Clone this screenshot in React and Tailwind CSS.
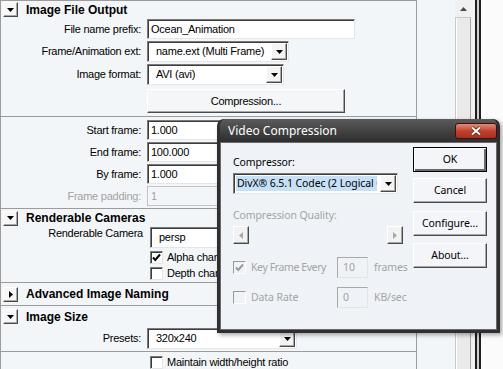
import React from "react";

const raised =
  "border border-t-white border-l-white border-r-[#4a4a4a] border-b-[#4a4a4a] shadow-[inset_-1px_-1px_0_#a8a8a8]";
const sunken =
  "border border-t-[#7a7a7a] border-l-[#7a7a7a] border-r-[#e6e6e6] border-b-[#e6e6e6] shadow-[inset_1px_1px_0_#3c3c3c]";

const DownTri = ({ color = "#000" }) => (
  <svg width="7" height="4" viewBox="0 0 7 4">
    <path d="M0 0h7L3.5 4z" fill={color} />
  </svg>
);

// collapse / expand button of a frame header
const TriBtn = ({ open = true }) => (
  <div
    className={`w-[15px] h-[15px] ml-[2px] flex items-center justify-center bg-[#f7f7f7] ${raised}`}
  >
    {open ? (
      <DownTri />
    ) : (
      <svg width="4" height="7" viewBox="0 0 4 7">
        <path d="M0 0v7l4-3.5z" fill="#000" />
      </svg>
    )}
  </div>
);

const ArrowBtn = () => (
  <div
    className={`w-[16px] h-[17px] mr-[1px] shrink-0 flex items-center justify-center bg-[#f4f4f4] ${raised}`}
  >
    <DownTri />
  </div>
);

const Check = ({ checked, color = "#000" }) => (
  <div
    className={`w-[13px] h-[13px] shrink-0 flex items-center justify-center bg-white ${sunken}`}
  >
    {checked && (
      <svg width="9" height="9" viewBox="0 0 9 9">
        <path
          d="M1 4.5l2.3 2.5L8 1.5"
          stroke={color}
          strokeWidth="2"
          fill="none"
        />
      </svg>
    )}
  </div>
);

const Row = ({ label, gray, className = "", children }) => (
  <div className={`flex items-center ${className}`}>
    <div
      className={`w-[140px] text-right ${gray ? "text-[#a2a2a2]" : "text-black"}`}
    >
      {label}
    </div>
    <div className="ml-[6px]">{children}</div>
  </div>
);

const Field = ({ value, className = "", gray }) => (
  <div
    className={`h-[20px] flex items-center pl-[3px] ${
      gray
        ? "bg-[#f3f6f9] border border-[#c4c4c4] text-[#a2a2a2]"
        : `bg-white ${sunken}`
    } ${className}`}
  >
    {value}
  </div>
);

const Select = ({ value, className = "" }) => (
  <div className={`h-[21px] flex items-center bg-white ${sunken} ${className}`}>
    <span className="flex-1 pl-[8px] whitespace-nowrap overflow-hidden">
      {value}
    </span>
    <ArrowBtn />
  </div>
);

const Header = ({ title, open = true, className = "" }) => (
  <div className={`flex items-center ${className}`}>
    <TriBtn open={open} />
    <span className="ml-[8px] font-bold text-[12px] tracking-normal">
      {title}
    </span>
  </div>
);

const DlgButton = ({ children, isDefault, className = "" }) => (
  <div
    className={`w-[74px] h-[25px] flex items-center justify-center bg-[#f3f5f8] ${
      isDefault
        ? "border border-black shadow-[inset_1px_1px_0_#fff,inset_-2px_-2px_0_#6a6a6a]"
        : raised
    } ${className}`}
  >
    {children}
  </div>
);

const GrayBox = ({ value }) => (
  <div className="w-[31px] h-[21px] shrink-0 pl-[5px] flex items-center border border-t-[#a8a8a8] border-l-[#a8a8a8] border-r-[#e4e4e4] border-b-[#e4e4e4]">
    {value}
  </div>
);

const VideoCompression = () => (
  <div className="absolute left-[217px] top-[119px] w-[283px] h-[214px] rounded-t-[7px] bg-[#2f2f2f] px-[3px] pb-[3px] flex flex-col shadow-[2px_2px_4px_rgba(0,0,0,0.35)] font-['Noto_Sans',sans-serif] text-[10.5px] tracking-[-0.1px]">
    <div className="relative h-[23px] flex items-center rounded-t-[6px] bg-linear-to-b from-[#5b5b5b] to-[#2e2e2e]">
      <span className="pl-[8px] text-white text-[12px] tracking-normal">
        Video Compression
      </span>
      <div className="absolute right-[0px] top-[4px] w-[42px] h-[16px] rounded-[3px] border border-[#3a1010] bg-linear-to-b from-[#e08a7a] via-[#c2402c] to-[#a8301f] flex items-center justify-center">
        <svg width="12" height="10" viewBox="0 0 12 10">
          <path
            d="M2 1.5l8 7M10 1.5l-8 7"
            stroke="#5a1a10"
            strokeWidth="3.4"
          />
          <path d="M2 1.5l8 7M10 1.5l-8 7" stroke="#fff" strokeWidth="2" />
        </svg>
      </div>
    </div>
    <div className="flex-1 bg-[#eff3f8] border border-[#6a6a6a] flex">
      <div className="w-[170px] shrink-0 ml-[12px] flex flex-col">
        <div className="mt-[12px] h-[15px] leading-[15px] text-black">
          Compressor:
        </div>
        <div
          className={`mt-[3px] w-[165px] h-[21px] flex items-center bg-white ${sunken}`}
        >
          <span className="ml-[2px] flex-1 h-[15px] leading-[15px] pl-[1px] bg-[#c6e1f7] text-black whitespace-nowrap overflow-hidden">
            DivX® 6.5.1 Codec (2 Logical CPUs)
          </span>
          <div className="w-[3px]" />
          <ArrowBtn />
        </div>
        <div className="mt-[14px] h-[15px] leading-[15px] text-[#a3a3a3]">
          Compression Quality:
        </div>
        <div className="mt-[3px] w-[170px] h-[18px] flex justify-between">
          <div
            className={`w-[16px] h-[18px] flex items-center justify-center bg-[#f2f2f2] ${raised}`}
          >
            <svg width="4" height="7" viewBox="0 0 4 7">
              <path d="M4 0v7L0 3.5z" fill="#a8a8a8" />
            </svg>
          </div>
          <div
            className={`w-[16px] h-[18px] flex items-center justify-center bg-[#f2f2f2] ${raised}`}
          >
            <svg width="4" height="7" viewBox="0 0 4 7">
              <path d="M0 0v7l4-3.5z" fill="#a8a8a8" />
            </svg>
          </div>
        </div>
        <div className="mt-[13px] h-[21px] flex items-center text-[#a3a3a3] whitespace-nowrap">
          <div className="w-[104px] shrink-0 flex items-center">
            <div className="w-[13px] h-[13px] shrink-0 flex items-center justify-center border border-t-[#9a9a9a] border-l-[#9a9a9a] border-r-white border-b-white bg-[#eff3f8]">
              <svg width="9" height="9" viewBox="0 0 9 9">
                <path
                  d="M1 4.5l2.3 2.5L8 1.5"
                  stroke="#9a9a9a"
                  strokeWidth="2"
                  fill="none"
                />
              </svg>
            </div>
            <span className="ml-[5px] tracking-[-0.4px]">Key Frame Every</span>
          </div>
          <GrayBox value="10" />
          <span className="ml-[6px] shrink-0">frames</span>
        </div>
        <div className="mt-[9px] h-[21px] flex items-center text-[#a3a3a3] whitespace-nowrap">
          <div className="w-[104px] shrink-0 flex items-center">
            <div className="w-[13px] h-[13px] shrink-0 border border-t-[#9a9a9a] border-l-[#9a9a9a] border-r-white border-b-white bg-[#eff3f8]" />
            <span className="ml-[5px]">Data Rate</span>
          </div>
          <GrayBox value="0" />
          <span className="ml-[6px] shrink-0">KB/sec</span>
        </div>
      </div>
      <div className="ml-[10px] flex flex-col text-black">
        <DlgButton isDefault className="mt-[4px]">
          OK
        </DlgButton>
        <DlgButton className="mt-[6px]">Cancel</DlgButton>
        <DlgButton className="mt-[8px]">Configure...</DlgButton>
        <DlgButton className="mt-[7px]">About...</DlgButton>
      </div>
    </div>
  </div>
);

export default function App() {
  return (
    <div className="relative w-[503px] h-[369px] overflow-hidden bg-[#f3f6f9] flex font-['Liberation_Sans',Arial,sans-serif] text-[11px] tracking-[-0.25px] text-black">
      {/* attribute panel */}
      <div className="w-[455px] shrink-0 flex flex-col">
        {/* Image File Output */}
        <div className="w-[417px] h-[117px] border border-[#9c9c9c] flex flex-col">
          <Header title="Image File Output" className="h-[17px]" />
          <Row label="File name prefix:" className="mt-[1px] h-[20px]">
            <Field value="Ocean_Animation" className="w-[208px]" />
          </Row>
          <Row label="Frame/Animation ext:" className="mt-[2px] h-[21px]">
            <Select value="name.ext (Multi Frame)" className="w-[142px]" />
          </Row>
          <Row label="Image format:" className="mt-[2px] h-[21px]">
            <Select value="AVI (avi)" className="w-[137px]" />
          </Row>
          <Row label="" className="mt-[4px] h-[24px]">
            <div
              className={`w-[198px] h-[24px] flex items-center justify-center bg-[#f4f6f8] ${raised}`}
            >
              Compression...
            </div>
          </Row>
        </div>
        <div className="w-[417px] h-[92px] border border-t-0 border-[#9c9c9c] flex flex-col gap-[2px] pt-[3px]">
          <Row label="Start frame:" className="h-[20px]">
            <Field value="1.000" className="w-[110px]" />
          </Row>
          <Row label="End frame:" className="h-[20px]">
            <Field value="100.000" className="w-[110px]" />
          </Row>
          <Row label="By frame:" className="h-[20px]">
            <Field value="1.000" className="w-[110px]" />
          </Row>
          <Row label="Frame padding:" gray className="h-[20px]">
            <Field value="1" gray className="w-[110px]" />
          </Row>
        </div>
        {/* Renderable Cameras */}
        <div className="w-[417px] h-[74px] border border-t-0 border-[#9c9c9c] flex flex-col">
          <Header title="Renderable Cameras" className="h-[18px]" />
          <div className="flex">
            <div className="w-[142px] text-right mt-[-2px]">
              Renderable Camera
            </div>
            <div
              className={`ml-[7px] w-[130px] h-[21px] flex items-center pl-[8px] bg-white ${sunken}`}
            >
              persp
            </div>
          </div>
          <div className="ml-[149px] mt-[2px] flex items-center h-[14px]">
            <Check checked />
            <span className="ml-[4px]">Alpha channel (Mask)</span>
          </div>
          <div className="ml-[149px] mt-[2px] flex items-center h-[14px]">
            <Check />
            <span className="ml-[4px]">Depth channel (Z Depth)</span>
          </div>
        </div>
        {/* Advanced Image Naming */}
        <div className="w-[417px] h-[23px] border border-t-0 border-[#9c9c9c] flex items-center">
          <Header title="Advanced Image Naming" open={false} />
        </div>
        {/* Image Size */}
        <div className="w-[417px] flex-1 border border-t-0 border-b-0 border-[#9c9c9c] flex flex-col">
          <Header title="Image Size" className="h-[21px]" />
          <Row label="Presets:" className="mt-[1px] h-[21px]">
            <Select value="320x240" className="w-[150px]" />
          </Row>
          <div className="mt-[2px] border-t border-[#9c9c9c]" />
          <div className="ml-[149px] mt-[3px] flex items-center h-[14px]">
            <Check />
            <span className="ml-[4px]">Maintain width/height ratio</span>
          </div>
        </div>
      </div>
      {/* vertical scrollbar */}
      <div className="w-[20px] shrink-0 flex flex-col bg-[#f0f0f0]">
        <div className="h-[17px] w-[16px] flex items-center justify-center">
          <svg width="7" height="4" viewBox="0 0 7 4">
            <path d="M0 4h7L3.5 0z" fill="#4a4a4a" />
          </svg>
        </div>
        <div className="flex-1 w-[16px] bg-[#eaeaea] border-l border-r border-t border-l-[#c8c8c8] border-r-[#a6a6a6] border-t-[#c8c8c8] shadow-[inset_1px_0_0_#fff]" />
      </div>
      {/* window edge */}
      <div className="w-[6px] shrink-0 bg-[#cfcfcf] border-l-2 border-r-2 border-[#1f1f1f]" />
      <div className="flex-1 bg-[#fbfbfb]" />
      <VideoCompression />
    </div>
  );
}
